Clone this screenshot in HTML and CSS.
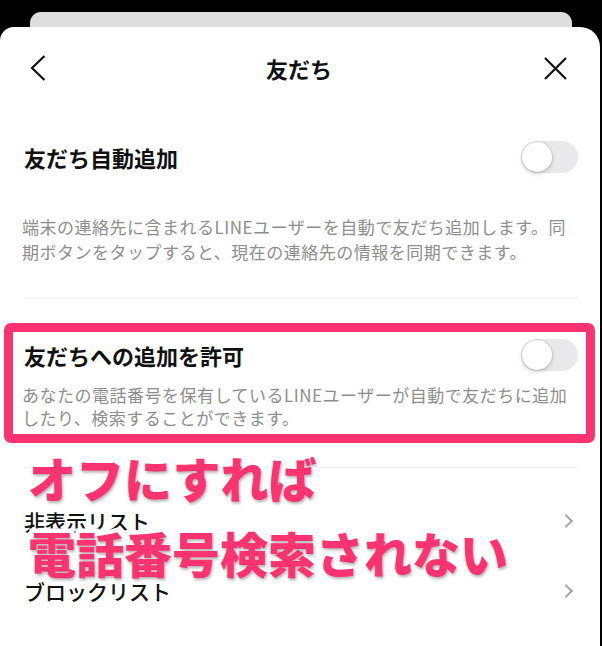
FILE: index.html
```html
<!DOCTYPE html>
<html lang="ja">
<head>
  <meta charset="UTF-8">
  <meta name="viewport" content="width=device-width, initial-scale=1.0">
  <title>友だち</title>
  <link rel="stylesheet" href="styles.css">
</head>
<body>
  <div class="card-behind"></div>

  <div class="sheet">
    <header class="nav">
      <svg class="nav-back" width="16" height="26" viewBox="0 0 16 26">
        <polyline points="14.5,1 2,13 14.5,25" fill="none" stroke="#111" stroke-width="2.2"/>
      </svg>
      <h1>友だち</h1>
      <svg class="nav-close" width="23" height="23" viewBox="0 0 23 23">
        <path d="M1 1 L22 22 M22 1 L1 22" stroke="#111" stroke-width="2.2"/>
      </svg>
    </header>

    <!-- auto add -->
    <section class="setting">
      <div class="setting-row">
        <h2>友だち自動追加</h2>
        <span class="toggle"><span class="knob"></span></span>
      </div>
      <p class="desc">端末の連絡先に含まれるLINEユーザーを自動で友だち追加します。同期ボタンをタップすると、現在の連絡先の情報を同期できます。</p>
    </section>

    <hr class="divider">

    <div class="highlight">
      <section class="setting setting-tight">
        <div class="setting-row">
          <h2>友だちへの追加を許可</h2>
          <span class="toggle"><span class="knob"></span></span>
        </div>
        <p class="desc">あなたの電話番号を保有しているLINEユーザーが自動で友だちに追加したり、検索することができます。</p>
      </section>
    </div>

    <hr class="divider divider-low">

    <ul class="menu">
      <li>非表示リスト <span class="chev"></span></li>
      <li>ブロックリスト <span class="chev"></span></li>
    </ul>

    <!-- big caption drawn over the list -->
    <div class="caption">オフにすれば<br>電話番号検索されない</div>
  </div>
</body>
</html>
```

FILE: styles.css
```css
html, body {
  margin: 0;
  padding: 0;
}

body {
  width: 602px;
  height: 646px;
  overflow: hidden;
  background: #000;
  font-family: "Noto Sans CJK JP", "Noto Sans", sans-serif;
  color: #111;
}

.card-behind {
  height: 15px;
  margin: 12px 30px 0 30px;
  background: #dedede;
  border-radius: 11px 11px 0 0;
}

.sheet {
  position: relative;
  margin-right: 2px;
  height: 619px;
  background: #fff;
  border-radius: 14px 20px 0 0;
}

/* top bar */
.nav {
  height: 82px;
  display: flex;
  align-items: center;
  justify-content: space-between;
  padding: 0 33px 0 30px;
}

.nav h1 {
  margin: 0;
  font-size: 22px;
  font-weight: 700;
  padding-left: 8px;
}

.setting {
  padding: 32px 22px 0 24px;
}

.setting-row {
  display: flex;
  align-items: center;
  justify-content: space-between;
  height: 32px;
}

.setting h2 {
  margin: 0;
  font-size: 22px;
  font-weight: 700;
}

.toggle {
  position: relative;
  width: 57px;
  height: 32px;
  border-radius: 16px;
  background: #e9e9eb;
}

.knob {
  position: absolute;
  left: 1px;
  top: 1px;
  width: 30px;
  height: 30px;
  border-radius: 50%;
  background: #fff;
  box-shadow: 0 0 0 1px rgba(0, 0, 0, 0.07), 0 2px 4px rgba(0, 0, 0, 0.18);
}

.desc {
  margin: 41px 0 0 -2px;
  font-size: 17px;
  line-height: 25px;
  letter-spacing: 0.5px;
  color: #8e8e8e;
}

.divider {
  margin: 34px 22px 0 24px;
  border: 0;
  border-top: 1px solid #eeeeee;
}

.divider-low {
  margin-top: 24px;
}

/* pink frame around the phone number setting */
.highlight {
  margin: 24px 5px 0 4px;
  border: 9px solid #fb3370;
  border-radius: 7px;
}

.setting-tight {
  padding: 7px 8px 5px 11px;
}

.setting-tight .desc {
  margin-top: 12px;
  line-height: 23px;
}

.menu {
  list-style: none;
  margin: 18px 0 0 0;
  padding: 0 24px 0 24px;
}

.menu li {
  height: 70px;
  display: flex;
  align-items: center;
  justify-content: space-between;
  font-size: 21px;
  font-weight: 500;
}

.chev {
  width: 8px;
  height: 8px;
  margin-right: 5px;
  border-top: 2px solid #a5a5a5;
  border-right: 2px solid #a5a5a5;
  transform: rotate(45deg);
}

.caption {
  position: absolute;
  left: 28px;
  top: 413px;
  font-size: 48px;
  line-height: 75px;
  font-weight: 900;
  color: #fb3370;
  -webkit-text-stroke: 9px #fff;
  paint-order: stroke fill;
  text-shadow: 1px 2px 3px rgba(0, 0, 0, 0.3);
}
```
